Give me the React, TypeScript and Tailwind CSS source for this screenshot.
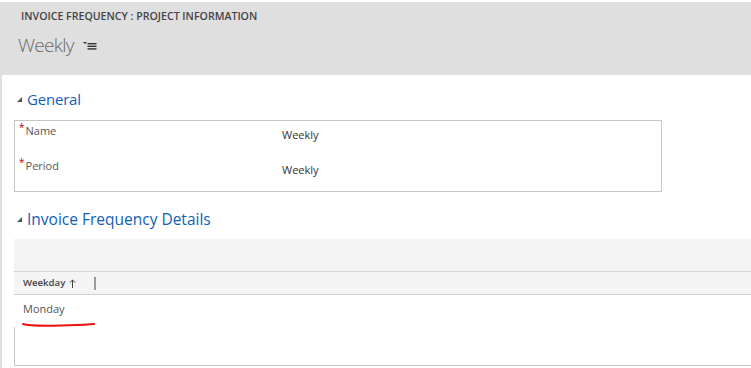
export default function App() {
  const font = { fontFamily: '"Open Sans", "Noto Sans", sans-serif' };
  return (
    <div className="w-[751px] h-[368px] overflow-hidden bg-white pt-[2px]" style={font}>
      <div className="h-[366px] bg-[#dfdfdf] pl-[2px] flex flex-col">
        {/* header */}
        <div className="h-[73px] pl-[19px] pt-[7px] shrink-0">
          <div className="text-[10.6px] leading-[14px] font-semibold text-[#444]">
            INVOICE FREQUENCY : PROJECT INFORMATION
          </div>
          <div className="mt-[9px] flex items-center -ml-[3px]">
            <span className="text-[19px] leading-[26px] font-light text-[#6b6b6b] tracking-[-0.7px]">Weekly</span>
            <svg width="14" height="10" viewBox="0 0 14 10" className="ml-[9px] mt-[1px]">
              <polygon points="0,1 4,1 2,3" fill="#333" />
              <rect x="4.5" y="2" width="9" height="1.4" fill="#333" />
              <rect x="4.5" y="4.6" width="9" height="1.4" fill="#333" />
              <rect x="4.5" y="7.2" width="9" height="1.4" fill="#333" />
            </svg>
          </div>
        </div>

        {/* body */}
        <div className="flex-1 bg-white pl-[12px] pt-[13px] relative">
          <div className="flex items-center">
            <svg width="6" height="6" viewBox="0 0 6 6" className="ml-[3px] mt-[2px]">
              <polygon points="5,0 5,5 0,5" fill="#555" />
            </svg>
            <span className="ml-[4px] text-[15px] leading-[22px] text-[#1160b7] tracking-[-0.2px]">General</span>
          </div>

          <div className="mt-[10px] w-[648px] border border-[#c6c6c6]">
            {[
              ['Name', 'Weekly'],
              ['Period', 'Weekly'],
            ].map(([label, value]) => (
              <div key={label} className="h-[35px] grid grid-cols-[267px_1fr]">
                <div className="pl-[4px] pt-[2px] flex items-start text-[11px] leading-[16px] text-[#555]">
                  <span className="text-[#c00000] text-[10px] leading-[10px] -mt-[1px] mr-[1px]">*</span>
                  {label}
                </div>
                <div className="pt-[6px] text-[11px] leading-[16px] text-[#333]">{value}</div>
              </div>
            ))}
          </div>

          <div className="mt-[16px] flex items-center">
            <svg width="6" height="6" viewBox="0 0 6 6" className="ml-[3px] mt-[2px]">
              <polygon points="5,0 5,5 0,5" fill="#555" />
            </svg>
            <span className="ml-[4px] text-[15.5px] leading-[22px] text-[#1160b7]">Invoice Frequency Details</span>
          </div>

          <div className="mt-[9px]">
            <div className="h-[33px] bg-[#f3f3f3] border-b border-[#d4d4d4]" />
            <div className="h-[23px] bg-[#f4f4f4] border-b border-[#d0d0d0] flex items-center pl-[9px]">
              <span className="text-[9.6px] leading-[14px] font-semibold text-[#444]">Weekday</span>
              <svg width="7" height="9" viewBox="0 0 7 9" className="ml-[4px]">
                <path d="M3.5 9 V1 M0.8 3.7 L3.5 1 L6.2 3.7" stroke="#444" strokeWidth="1" fill="none" />
              </svg>
              <span className="ml-[18px] w-[2px] h-[13px] bg-[#9a9a9a]" />
            </div>
            <div className="h-[32px] pl-[9px] pt-[6px] text-[11px] leading-[16px] text-[#555]">Monday</div>
            <div className="h-[39px] border-l border-b border-[#c6c6c6]" />
          </div>

          <svg
            width="80"
            height="8"
            viewBox="0 0 80 8"
            className="absolute left-[19px] top-[246px]"
          >
            <path d="M2 3 C 8 5, 20 5, 40 4.5 S 65 3.5, 73 3" stroke="#ee1111" strokeWidth="2" fill="none" strokeLinecap="round" />
          </svg>
        </div>
      </div>
    </div>
  );
}
